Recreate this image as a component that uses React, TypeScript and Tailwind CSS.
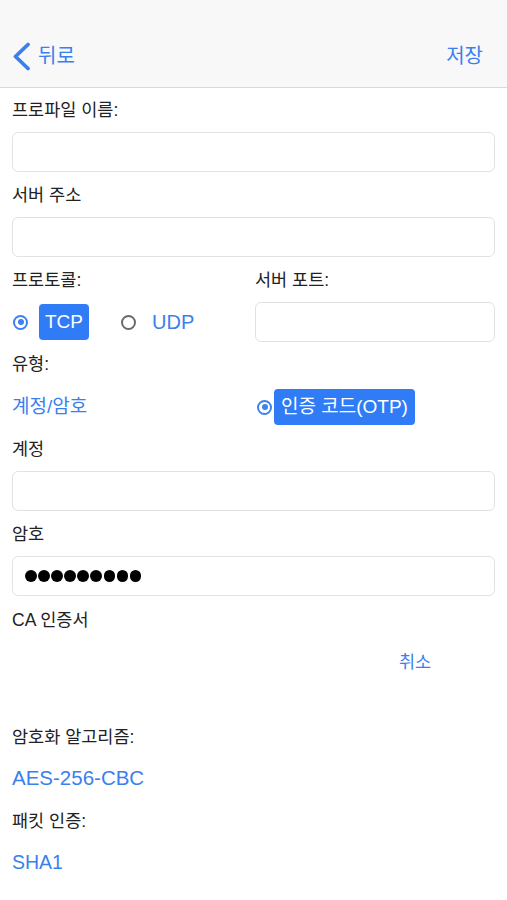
import React from 'react'

const FONT = { fontFamily: '"Liberation Sans", "Noto Sans CJK KR", sans-serif' }

function Label({ children, className = '' }: { children: React.ReactNode; className?: string }) {
  return <div className={`h-[24px] leading-[24px] text-[17.5px] text-[#222] ${className}`}>{children}</div>
}

function Field({ className = '', children }: { className?: string; children?: React.ReactNode }) {
  return (
    <div className={`h-[40px] rounded-[6px] border border-[#e2e2e2] bg-white flex items-center px-[12px] ${className}`}>
      {children}
    </div>
  )
}

function Radio({ on }: { on: boolean }) {
  return on ? (
    <span className="shrink-0 w-[15px] h-[15px] rounded-full border-[2.5px] border-[#3c82f0] flex items-center justify-center">
      <span className="w-[6px] h-[6px] rounded-full bg-[#3c82f0]" />
    </span>
  ) : (
    <span className="shrink-0 block w-[15px] h-[15px] rounded-full border-[2.5px] border-[#6b6b6b]" />
  )
}

export default function App() {
  return (
    <div className="w-[507px] h-[900px] bg-white overflow-hidden" style={FONT}>
      <div className="h-[88px] bg-[#f8f8f8] border-b border-[#d9d9d9] pt-[40px]">
        <div className="h-[32px] flex items-center justify-between pl-[12px] pr-[24px]">
          <div className="flex items-center gap-[7px] text-[#3a7ff0]">
            <svg width="19" height="29" viewBox="0 0 19 29" fill="none">
              <path d="M16 2.5 L3.5 14.5 L16 26.5" stroke="#3a7ff0" strokeWidth="3.8" strokeLinecap="round" strokeLinejoin="round" />
            </svg>
            <span className="text-[20px]">뒤로</span>
          </div>
          <span className="text-[20px] text-[#3a7ff0]">저장</span>
        </div>
      </div>

      <div className="px-[12px]">
        <Label className="mt-[10px]">프로파일 이름:</Label>
        <Field className="mt-[10px]" />
        <Label className="mt-[11px]">서버 주소</Label>
        <Field className="mt-[10px]" />

        <div className="flex mt-[11px]">
          <Label className="w-[243px]">프로토콜:</Label>
          <Label>서버 포트:</Label>
        </div>
        <div className="flex mt-[10px] h-[40px] items-center">
          <div className="w-[243px] flex items-center">
            <span className="ml-[1px] flex"><Radio on /></span>
            <span className="ml-[11px] h-[36px] px-[6px] rounded-[4px] bg-[#2f7cf6] text-white text-[19px] flex items-center">TCP</span>
            <span className="ml-[32px] flex"><Radio on={false} /></span>
            <span className="ml-[16px] text-[20px] text-[#3a7ff0]">UDP</span>
          </div>
          <Field className="flex-1" />
        </div>

        <Label className="mt-[10px]">유형:</Label>
        <div className="flex mt-[13px] h-[36px] items-center">
          <span className="w-[245px] text-[19px] text-[#3a7ff0]">계정/암호</span>
          <Radio on />
          <span className="ml-[2px] h-[36px] px-[7px] rounded-[4px] bg-[#2f7cf6] text-white text-[19px] flex items-center">인증 코드(OTP)</span>
        </div>

        <Label className="mt-[12px]">계정</Label>
        <Field className="mt-[10px]" />
        <Label className="mt-[11px]">암호</Label>
        <Field className="mt-[10px]">
          <div className="flex gap-[1.6px]">
            {Array.from({ length: 9 }).map((_, i) => (
              <span key={i} className="w-[11.5px] h-[11.5px] rounded-full bg-black" />
            ))}
          </div>
        </Field>

        <Label className="mt-[12px]">CA 인증서</Label>
        <div className="mt-[18px] h-[24px] leading-[24px] pl-[387px] text-[17.5px] text-[#3a7ff0]">취소</div>

        <Label className="mt-[51px]">암호화 알고리즘:</Label>
        <div className="mt-[17px] h-[24px] leading-[24px] text-[20.5px] text-[#3a7ff0]">AES-256-CBC</div>
        <Label className="mt-[19px]">패킷 인증:</Label>
        <div className="mt-[17px] h-[24px] leading-[24px] text-[19.5px] text-[#3a7ff0]">SHA1</div>
      </div>
    </div>
  )
}
